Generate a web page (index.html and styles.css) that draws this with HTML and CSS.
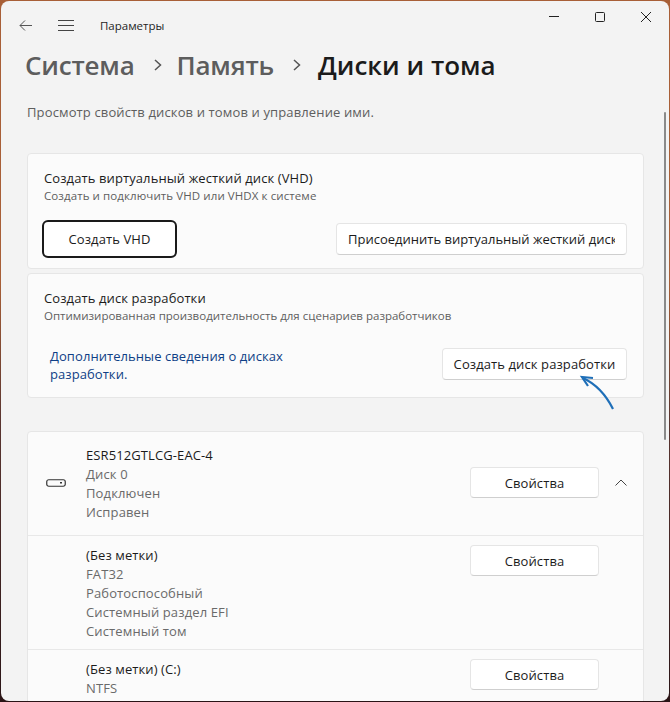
FILE: index.html
```html
<!DOCTYPE html>
<html lang="ru">
<head>
<meta charset="utf-8">
<title>Параметры</title>
<link rel="stylesheet" href="styles.css">
</head>
<body>
<div class="window">
  <header class="titlebar">
    <svg class="ico back" width="13" height="11" viewBox="0 0 13 11"><path d="M13 5.500H1M6 .5 1 5.500l5 5" fill="none" stroke="#555" stroke-width="1"/></svg>
    <svg class="ico menu" width="16" height="11" viewBox="0 0 16 11"><path d="M0 .5h16M0 5.500h16M0 10.500h16" fill="none" stroke="#444" stroke-width="1"/></svg>
    <span class="apptitle">Параметры</span>
    <div class="caps">
      <svg width="10" height="10" viewBox="0 0 10 10"><path d="M0 4.500h10" stroke="#222" fill="none"/></svg>
      <svg width="10" height="10" viewBox="0 0 10 10"><rect x=".5" y=".5" width="9" height="9" rx="1" stroke="#222" fill="none"/></svg>
      <svg width="10" height="10" viewBox="0 0 10 10"><path d="M0 0l10 10M10 0 0 10" stroke="#222" fill="none"/></svg>
    </div>
  </header>
  <h1 class="crumbs">
    <span class="crumb">Система</span>
    <svg class="sep" width="10" height="12" viewBox="0 0 10 12"><path d="M2 1 7.500 6 2 11" fill="none" stroke="#555" stroke-width="1.500"/></svg>
    <span class="crumb">Память</span>
    <svg class="sep" width="10" height="12" viewBox="0 0 10 12"><path d="M2 1 7.500 6 2 11" fill="none" stroke="#555" stroke-width="1.500"/></svg>
    <span class="crumb current">Диски и тома</span>
  </h1>
  <p class="intro">Просмотр свойств дисков и томов и управление ими.</p>

  <section class="card vhd">
    <div class="name">Создать виртуальный жесткий диск (VHD)</div>
    <div class="hint">Создать и подключить VHD или VHDX к системе</div>
    <div class="actions">
      <button class="btn focused">Создать VHD</button>
      <button class="btn clipped"><span>Присоединить виртуальный жесткий диск</span></button>
    </div>
  </section>

  <section class="card dev">
    <div class="name">Создать диск разработки</div>
    <div class="hint">Оптимизированная производительность для сценариев разработчиков</div>
    <div class="actions devactions">
      <a class="link">Дополнительные сведения о дисках разработки.</a>
      <button class="btn devbtn">Создать диск разработки</button>
    </div>
    <svg class="arrow" width="45" height="40" viewBox="0 0 45 40"><path d="M38 37C32 25 23 13 8 6" fill="none" stroke="#1f6fb8" stroke-width="2.200"/><path d="M18 6 7 5l6 9" fill="none" stroke="#1f6fb8" stroke-width="2.200"/></svg>
  </section>

  <section class="card disks">
    <div class="row disk">
      <svg class="drive" width="20" height="8" viewBox="0 0 20 8"><rect x=".75" y=".75" width="18.500" height="6.500" rx="2" fill="none" stroke="#333" stroke-width="1.200"/><rect x="14" y="3" width="2" height="1.500" fill="#333"/></svg>
      <div class="lines">
        <div class="name">ESR512GTLCG-EAC-4</div>
        <div class="sub">Диск 0</div>
        <div class="sub">Подключен</div>
        <div class="sub">Исправен</div>
      </div>
      <button class="btn prop">Свойства</button>
      <svg class="chev" width="12" height="8" viewBox="0 0 12 8"><path d="M.5 6.500 6 1 11.500 6.500" fill="none" stroke="#444"/></svg>
    </div>
    <div class="row vol">
      <div class="lines">
        <div class="name">(Без метки)</div>
        <div class="sub">FAT32</div>
        <div class="sub">Работоспособный</div>
        <div class="sub">Системный раздел EFI</div>
        <div class="sub">Системный том</div>
      </div>
      <button class="btn prop">Свойства</button>
    </div>
    <div class="row vol last">
      <div class="lines">
        <div class="name">(Без метки) (C:)</div>
        <div class="sub">NTFS</div>
      </div>
      <button class="btn prop">Свойства</button>
    </div>
  </section>
  <div class="thumb"></div>
</div>
</body>
</html>
```
FILE: styles.css
```css
* { box-sizing: border-box; }
html, body { margin: 0; height: 702px; overflow: hidden; }
body { background: linear-gradient(180deg, #a85f37 0, #a85f37 40%, #5a3530 60%, #2a1416 100%); font-family: "Open Sans", "Noto Sans", sans-serif; letter-spacing: .13px; }
.window { position: relative; height: 700px; margin-left: 1px; margin-top: 1px; width: 668px; background: #f3f3f3; border-radius: 8px; overflow: hidden; padding: 0 26px; }
.titlebar { display: flex; align-items: center; height: 49px; margin: 0 -26px; padding: 0 0 0 18px; }
.menu { margin-left: 26px; }
.apptitle { margin-left: 26px; font-size: 11.500px; color: #1f1f1f; letter-spacing: 0; }
.caps { margin-left: auto; display: flex; gap: 36px; padding-right: 18px; margin-top: -17px; }
.crumbs { display: flex; align-items: center; margin: -3px 0 0 -2px; height: 36px; font-size: 26px; font-weight: 600; color: #5d5d5d; letter-spacing: -.2px; }
.sep { margin: 0 14px 0 18px; }
.current { color: #1b1b1b; letter-spacing: 0; margin-left: 2px; }
.intro { margin: 20px 0 0; font-size: 13px; line-height: 18px; color: #5e5e5e; }
.card { background: #fbfbfb; border: 1px solid #e6e6e6; border-radius: 4px; width: 617px; position: relative; }
.vhd { margin-top: 32px; height: 116px; padding: 15px 16px 0; }
.dev { margin-top: 4px; height: 125px; padding: 15px 16px 0; }
.name { font-size: 13px; line-height: 19px; color: #1b1b1b; letter-spacing: .1px; }
.hint { font-size: 11.500px; line-height: 16px; color: #5e5e5e; }
.vhd .hint { letter-spacing: .09px; }
.dev .hint { letter-spacing: 0; }
.sub { font-size: 13px; line-height: 19px; color: #6a6a6a; }
.actions { display: flex; justify-content: space-between; align-items: center; margin-top: 16px; }
.btn { height: 32px; background: #fff; border: 1px solid #e5e5e5; border-bottom-color: #cfcfcf; border-radius: 4px; font: 13px "Open Sans", "Noto Sans", sans-serif; letter-spacing: .1px; color: #1b1b1b; padding: 0; }
.focused { width: 135px; height: 38px; margin-left: -2px; border: 2px solid #1a1a1a; border-radius: 6px; }
.clipped { width: 291px; padding: 0 11px; overflow: hidden; text-align: left; letter-spacing: 0; }
.clipped span { display: block; white-space: nowrap; overflow: hidden; }
.devactions { margin-top: 21px; padding-left: 6px; }
.link { width: 250px; font-size: 13px; line-height: 18px; color: #0f3f86; letter-spacing: .07px; margin-top: 2px; }
.devbtn { width: 185px; }
.arrow { position: absolute; right: 23px; bottom: -15px; }
.disks { margin-top: 33px; height: 320px; }
.row { display: flex; border-top: 1px solid #e8e8e8; position: relative; }
.disk { border-top: 0; height: 103px; align-items: center; padding: 0 16px 0 18px; }
.disk .lines { margin-left: 20px; }
.drive { flex: none; margin-top: -2px; }
.lines { flex: 1; }
.prop { width: 129px; height: 31px; flex: none; }
.disk .prop { margin-top: -2px; }
.vol .prop { margin-top: -1px; }
.chev { margin-left: 16px; flex: none; margin-top: -2px; }
.vol { padding: 10px 44px 0 58px; height: 114px; }
.thumb { position: absolute; right: 3px; top: 111px; width: 2px; height: 328px; background: #8a8a8a; border-radius: 1px; }
```
